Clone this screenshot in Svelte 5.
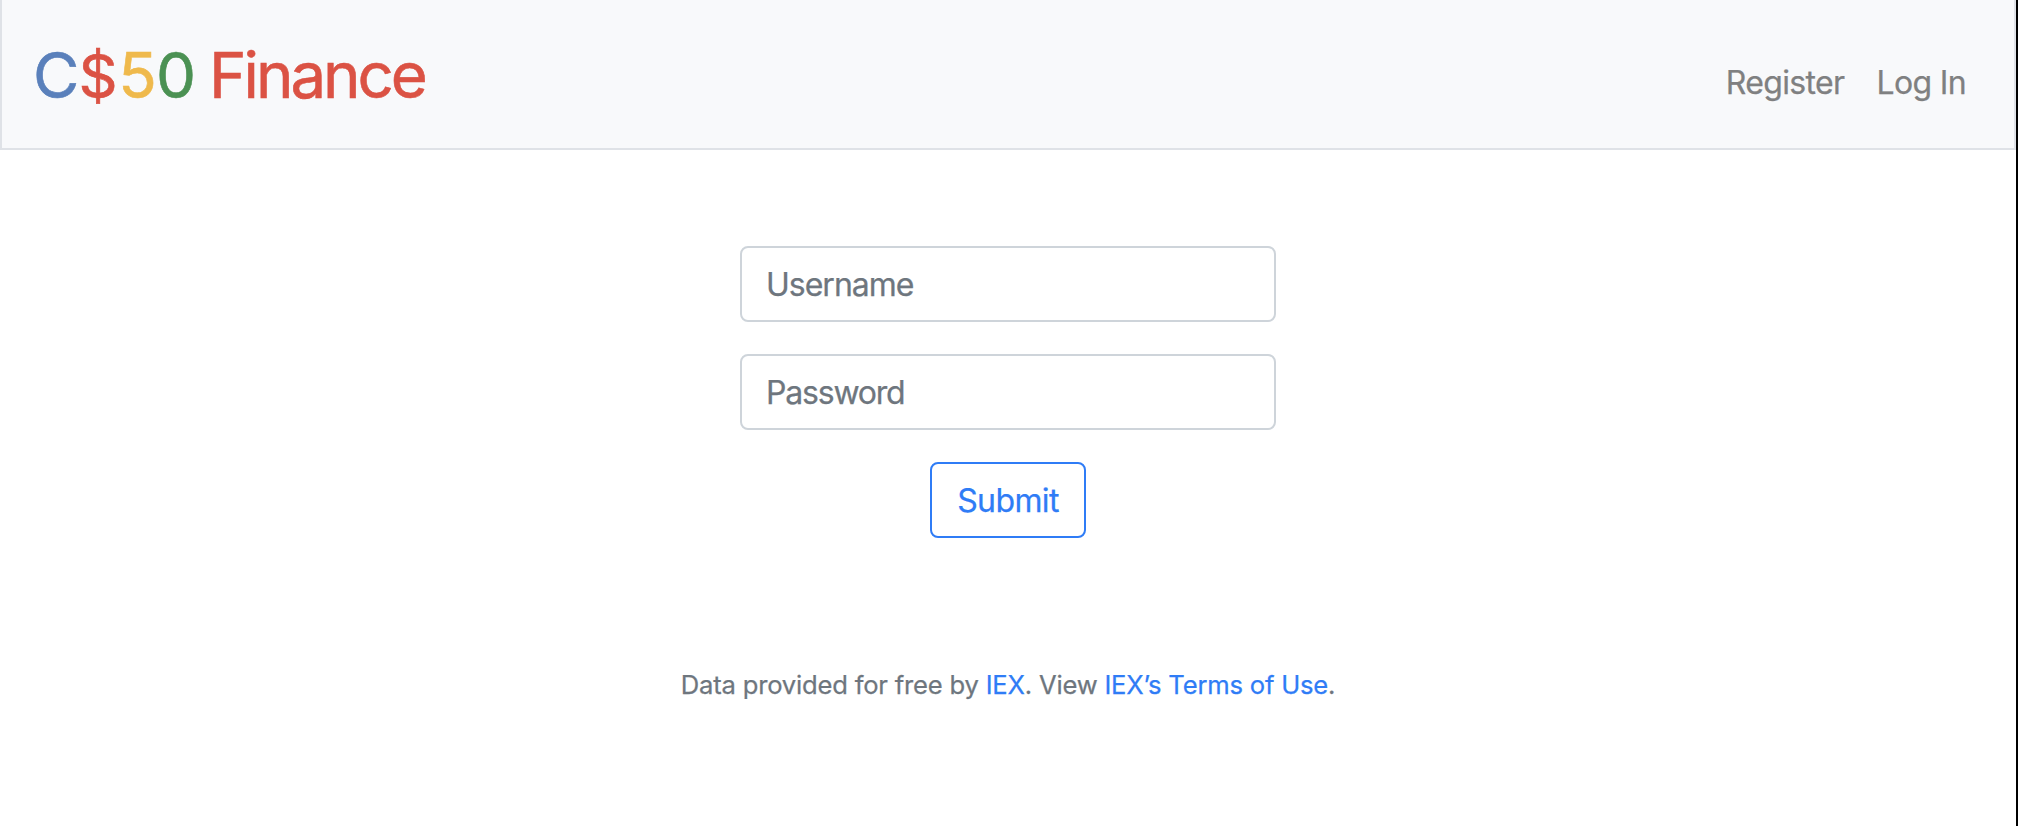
<script>
  const logo = [
    { text: 'C', tone: 'blue' },
    { text: '$', tone: 'dollar' },
    { text: '5', tone: 'yellow' },
    { text: '0', tone: 'green' },
  ];
</script>

<div class="page">
  <nav>
    <a class="brand" href="#home">{#each logo as part}<span class={part.tone}>{part.text}</span>{/each}<span class="name">Finance</span></a>
    <div class="links">
      <a class="register" href="#register">Register</a>
      <a class="login" href="#login">Log In</a>
    </div>
  </nav>
  <main>
    <form>
      <input class="user" type="text" placeholder="Username" aria-label="Username" />
      <input class="pass" type="password" placeholder="Password" aria-label="Password" />
      <button type="button"><span>Submit</span></button>
    </form>
  </main>
  <footer>Data provided for free by <a href="#iex">IEX</a>. View <a href="#terms">IEX’s Terms of Use</a>.</footer>
</div>

<style>
  :global(body) { background: #fff; overflow: hidden; }
  .page {
    box-sizing: border-box;
    width: 100%;
    height: 826px;
    border-right: 2px solid #000;
    font-family: Inter, sans-serif;
    font-size: 32px;
    line-height: 48px;
    color: #212529;
    -webkit-text-stroke: 0.25px currentColor;
  }
  a { text-decoration: none; -webkit-text-stroke-color: currentColor; }
  nav {
    box-sizing: border-box;
    height: 150px;
    display: flex;
    justify-content: space-between;
    align-items: center;
    padding: 0 48px 0 31px;
    background: #f8f9fb;
    border: 2px solid #dfe2e7;
    border-top: 0;
  }
  .brand {
    padding-top: 2px;
    font-size: 63.5px;
    line-height: 96px;
    letter-spacing: -1px;
    white-space: nowrap;
  }
  .brand span { -webkit-text-stroke: 0.6px currentColor; }
  .blue { color: #5a80bb; }
  .dollar, .name { color: #db5244; }
  .dollar { font-size: 61px; letter-spacing: 0.8px; }
  .yellow { color: #efb94c; }
  .green { color: #4b9153; }
  .name { margin-left: 14px; letter-spacing: -3px; }
  .links { display: flex; gap: 32px; padding-top: 17px; }
  .links a { color: #7f8081; letter-spacing: -0.65px; }
  main { padding-top: 96px; }
  form { display: flex; flex-direction: column; align-items: center; gap: 32px; }
  input {
    box-sizing: border-box;
    width: 536px;
    height: 76px;
    padding: 0 24px;
    border: 2px solid #ced4da;
    border-radius: 8px;
    background: #fff;
    font: 32px/48px Inter, sans-serif;
    letter-spacing: -1px;
    outline: none;
  }
  .pass { letter-spacing: -1.2px; }
  input::placeholder { color: #6e767e; opacity: 1; }
  button {
    box-sizing: border-box;
    width: 156px;
    height: 76px;
    padding: 2px 0 0;
    border: 2px solid #2f7cf6;
    border-radius: 8px;
    background: #fff;
    color: #2f7cf6;
    font: 32px/48px Inter, sans-serif;
    letter-spacing: -0.6px;
  }
  footer {
    padding-top: 123px;
    text-align: center;
    color: #6e767e;
    font-size: 25.6px;
    letter-spacing: -0.2px;
  }
  footer a { color: #2f7cf6; }
</style>
